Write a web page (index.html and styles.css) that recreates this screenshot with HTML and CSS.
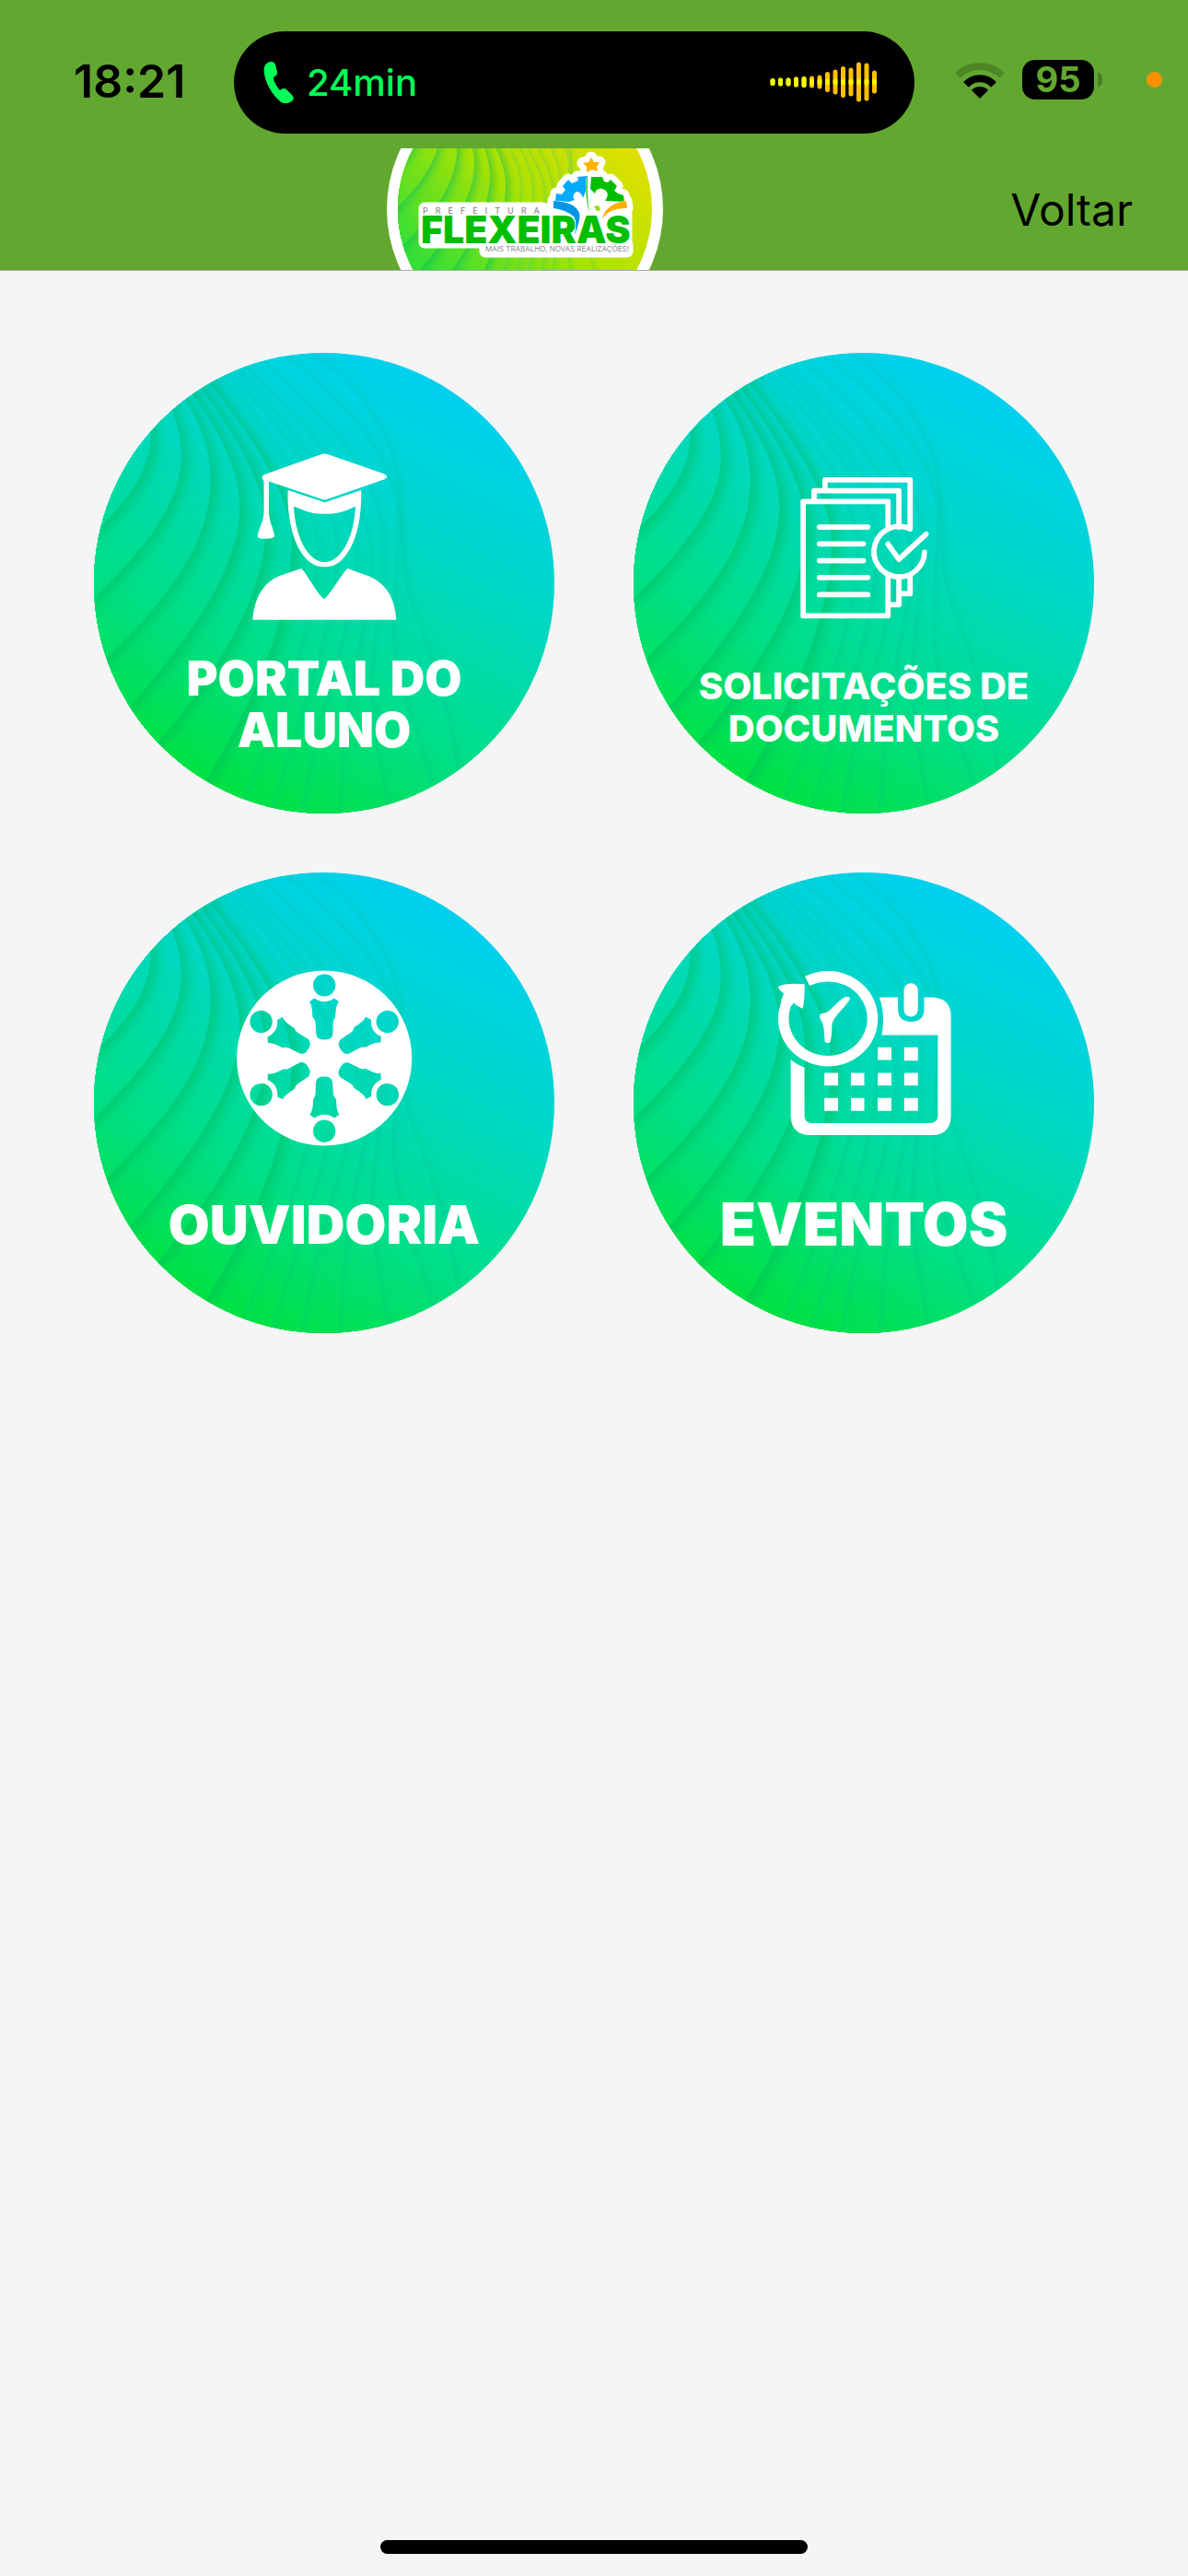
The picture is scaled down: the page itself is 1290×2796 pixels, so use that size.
FILE: index.html
```html
<!DOCTYPE html>
<html lang="pt-BR">
<head>
    <meta charset="UTF-8">
    <meta name="viewport" content="width=device-width, initial-scale=1.0">
    <title>Prefeitura Flexeiras</title>
    <link rel="stylesheet" href="styles.css">
</head>
<body>
    <!-- shared shapes: layered waves used by the cards and the logo -->
    <svg class="defs" aria-hidden="true">
        <defs>
            <linearGradient id="aqua" gradientUnits="userSpaceOnUse" x1="1100" y1="100" x2="400" y2="1440">
                <stop offset="0" stop-color="#00d0f0"/>
                <stop offset="0.3" stop-color="#00d8cc"/>
                <stop offset="0.7" stop-color="#00df86"/>
                <stop offset="1" stop-color="#00e23e"/>
            </linearGradient>
            <linearGradient id="lime" gradientUnits="userSpaceOnUse" x1="1180" y1="250" x2="320" y2="1150">
                <stop offset="0" stop-color="#e2e000"/>
                <stop offset="0.5" stop-color="#ace300"/>
                <stop offset="1" stop-color="#35df35"/>
            </linearGradient>
            <filter id="fold" filterUnits="userSpaceOnUse" x="-50" y="-50" width="1650" height="1650">
                <feDropShadow dx="24" dy="6" stdDeviation="20" flood-color="#00b858" flood-opacity="0.5"/>
            </filter>
            <filter id="softFold" filterUnits="userSpaceOnUse" x="-50" y="-50" width="1650" height="1650">
                <feDropShadow dx="14" dy="2" stdDeviation="14" flood-color="#00b888" flood-opacity="0.24"/>
            </filter>
            <symbol id="waves" viewBox="36 38 1476 1476">
                <rect x="36" y="38" width="1476" height="1476"/>
                <g filter="url(#softFold)"><path d="M0 0H700L720 40C850 110 920 220 970 320C1020 420 1010 560 1030 760C1050 900 1180 1080 1220 1560H0Z"/></g>
                <g filter="url(#softFold)"><path d="M0 0H610L640 52C850 190 1005 400 1005 560C1005 760 985 850 995 1000C1010 1130 1080 1280 1160 1560H0Z"/></g>
                <g filter="url(#softFold)"><path d="M0 0H530L570 70C760 220 950 440 955 620C960 850 900 1050 930 1200C940 1330 970 1450 985 1560H0Z"/></g>
                <g filter="url(#softFold)"><path d="M0 0H490L520 85C690 240 910 500 920 680C930 880 820 1100 820 1560H0Z"/></g>
                <g filter="url(#softFold)"><path d="M0 0H460L490 95C640 240 860 520 872 680C880 880 760 1080 690 1560H0Z"/></g>
                <g filter="url(#softFold)"><path d="M0 0H430L465 108C620 260 800 490 810 650C815 880 700 1180 580 1560H0Z"/></g>
                <g filter="url(#softFold)"><path d="M0 0H400L440 120C560 260 740 480 745 640C755 870 640 1180 470 1560H0Z"/></g>
                <g filter="url(#fold)"><path d="M0 0H370L410 140C520 280 670 480 670 650C665 880 560 1150 350 1480L0 1560Z"/></g>
                <g filter="url(#fold)"><path d="M0 0H340L385 160C480 290 580 440 585 590C590 810 440 1060 180 1360L0 1560Z"/></g>
                <g filter="url(#fold)"><path d="M0 0H310L355 175C430 280 500 400 503 530C505 720 350 960 80 1250L0 1360Z"/></g>
                <g filter="url(#fold)"><path d="M0 0H280L328 190C380 270 410 350 410 450C405 660 270 840 0 1090Z"/></g>
                <g filter="url(#fold)"><path d="M0 0H250L288 230C308 280 318 330 315 390C305 540 180 690 0 860Z"/></g>
                <g filter="url(#fold)"><path d="M0 0H200L218 290C220 430 130 530 0 650Z"/></g>
            </symbol>
            <g id="emblem">
                <path d="M222 10L225 15L231 15L228 20L229 25L223 23L217 26L217 20L213 16L219 15Z" fill="#ffb400"/>
                <path d="M218 30L207 31L208 35L201 38L197 34L191 41L194 45L190 50L184 49L183 57L198 58L204 56Q200 51 206 47Q211 47 213 54L217 44Z" fill="#00aaff"/>
                <path d="M181 57Q204 58 209 70Q211 76 204 94Q207 80 203 74Q195 67 181 65Z" fill="#0096e6"/>
                <path d="M221 44L222 31L234 31L236 36L240 37L243 34L250 41L247 46L251 49L257 51L258 58L237 57Q242 50 238 46Q232 41 227 46L226 49Z" fill="#00be00"/>
                <path d="M260 57L261 65Q243 64 234 76Q238 60 260 57Z" fill="#ffae00"/>
                <path d="M217 32Q215 52 220 71Q217 52 218 32Z" fill="#00be00"/>
                <path d="M225 63L230 62L232 67L228 68Z" fill="#9bd400"/>
            </g>
        </defs>
    </svg>

    <header class="header">
        <div class="status-bar">
            <span class="time">18:21</span>
            <div class="island">
                <svg class="phone-icon" viewBox="0 0 33 45" aria-hidden="true">
                    <path d="M5 1C8-1 12 0 13 3L15 11C16 14 13 15 11 17C11 21 15 28 18 31C20 29 23 28 25 30L31 36C34 39 33 42 29 44C25 46 21 46 17 42C9 35 2 22 1 13C0 7 1 3 5 1Z"/>
                </svg>
                <span class="call-time">24min</span>
                <svg class="sound-wave" viewBox="0 0 118 44" aria-hidden="true">
                    <path d="M3 20.500V23.500M11.500 20V24M20 20V24M28.500 19V25M37 18.500V25.500M45.500 18V26M54 17V27M62.500 13.500V30.500M71 11V33M79.500 7.500V36.500M88 9V35M96.500 3V41M105 4V40M113.500 12V32" stroke="#ffc000"/>
                    <path d="M3 20.500V23.500M11.500 20V24M20 20V24M28.500 19V25M37 18.500V25.500" stroke="#f2fb00"/>
                    <path d="M45.500 21V23M54 21V23M62.500 21V23M71 21V23M79.500 21V23M88 21V23M96.500 21V23M105 21V23M113.500 21V23" stroke="#fff200"/>
                </svg>
            </div>
            <div class="indicators">
                <svg class="wifi-icon" viewBox="0 0 54 40" aria-hidden="true">
                    <path d="M3 15A34 34 0 0 1 51 15" fill="none" stroke="#000" stroke-opacity="0.2" stroke-width="8"/>
                    <path d="M12 25A20 20 0 0 1 42 25" fill="none" stroke="#000" stroke-width="8"/>
                    <path d="M27 40L18 31A12 12 0 0 1 36 31Z"/>
                </svg>
                <div class="battery"><span class="level">95</span></div>
                <span class="mic-dot"></span>
            </div>
        </div>
        <nav class="nav">
            <div class="logo">
                <svg class="logo-image" viewBox="0 0 300 132" role="img" aria-label="Prefeitura Flexeiras">
                    <clipPath id="logoRound"><circle cx="150" cy="66" r="138"/></clipPath>
                    <circle cx="150" cy="66" r="150" fill="#fff"/>
                    <g clip-path="url(#logoRound)">
                        <use href="#waves" x="0" y="-84" width="300" height="300" fill="url(#lime)"/>
                    </g>
                    <g class="logo-outline">
                        <use href="#emblem"/>
                        <path d="M41 71H260V102H41ZM107 105H261V112H107ZM41 65H170V72H41ZM190 58H252V80H190Z"/>
                    </g>
                    <text class="logo-top" x="39" y="71">PREFEITURA</text>
                    <text class="logo-name" x="37" y="103">FLEXEIRAS</text>
                    <text class="logo-slogan" x="107" y="112">MAIS TRABALHO, NOVAS REALIZAÇÕES!</text>
                    <use href="#emblem" stroke="#fff" stroke-width="1" paint-order="stroke"/>
                </svg>
            </div>
            <button type="button" class="back">Voltar</button>
        </nav>
    </header>

    <main class="menu">
        <a class="card" href="#portal">
            <svg class="card-bg" aria-hidden="true"><use href="#waves" width="100%" height="100%" fill="url(#aqua)"/></svg>
            <svg class="card-icon" viewBox="478 334 591 591" aria-hidden="true">
                <path d="M768 363Q775 360 782 363L965 426Q985 436 965 445L782 508Q775 511 768 508L596 451V553C597 580 613 608 614 626Q613 635 587 635Q560 635 560 628C560 610 579 580 580 553V450Q568 435 580 429Z"/>
                <path fill-rule="evenodd" d="M657 479L775 518L892 479C896 600 860 700 800 722Q775 728 750 722C690 700 653 600 657 479ZM676 531C680 620 715 695 762 708Q775 711 788 708C835 695 870 620 874 531C850 540 830 555 775 555C720 555 700 537 676 531Z"/>
                <path d="M544 895C550 810 590 768 635 752L700 730C722 752 750 812 774 828C792 815 832 745 848 730L910 752C960 770 1000 810 1005 895Z"/>
            </svg>
            <span class="label">PORTAL DO ALUNO</span>
        </a>
        <a class="card" href="#documentos">
            <svg class="card-bg" aria-hidden="true"><use href="#waves" width="100%" height="100%" fill="url(#aqua)"/></svg>
            <svg class="card-icon outline" viewBox="497 334 591 591" aria-hidden="true">
                <path d="M870 598V515H598V882H870V755M633 510V481H905V598M905 760V846H876M668 475V446H941V603A81 81 0 1 0 987 678M941 757V811H910"/>
                <path d="M870 652L905 701L992 620M650 597H805M650 651H791M650 705H791M650 759H805M650 814H805"/>
            </svg>
            <span class="label small">SOLICITAÇÕES DE DOCUMENTOS</span>
        </a>
        <a class="card" href="#ouvidoria">
            <svg class="card-bg" aria-hidden="true"><use href="#waves" width="100%" height="100%" fill="url(#aqua)"/></svg>
            <svg class="card-icon" viewBox="478 345 591 591" aria-hidden="true">
                <defs>
                    <g id="person">
                        <circle cx="774" cy="411" r="36"/>
                        <path d="M742 453L726 464C737 480 734 500 737 515Q746 520 746 540L748 570Q752 586 774 586Q797 586 801 570L802 545Q801 520 809 515C811 495 810 478 821 463L805 453Q774 475 742 453Z"/>
                    </g>
                    <mask id="people">
                        <rect x="478" y="345" width="591" height="591" fill="#fff"/>
                        <g fill="#000">
                            <use href="#person"/>
                            <use href="#person" transform="rotate(60 774 645)"/>
                            <use href="#person" transform="rotate(120 774 645)"/>
                            <use href="#person" transform="rotate(180 774 645)"/>
                            <use href="#person" transform="rotate(240 774 645)"/>
                            <use href="#person" transform="rotate(300 774 645)"/>
                        </g>
                    </mask>
                </defs>
                <circle cx="774" cy="645" r="281" mask="url(#people)"/>
            </svg>
            <span class="label large">OUVIDORIA</span>
        </a>
        <a class="card" href="#eventos">
            <svg class="card-bg" aria-hidden="true"><use href="#waves" width="100%" height="100%" fill="url(#aqua)"/></svg>
            <svg class="card-icon" viewBox="497 345 591 591" aria-hidden="true">
                <path d="M611 398A143 136 0 1 1 550 457" fill="none" stroke="#fff" stroke-width="34"/>
                <path d="M518 416Q540 403 602 408Q604 450 597 486Q575 478 569 468L550 485L526 462Q538 435 534 436Q518 425 518 416Z"/>
                <path d="M742 448Q752 452 744 462C725 490 692 515 690 540Q690 580 684 594Q677 598 668 594C664 570 668 540 653 520Q648 505 656 502Q675 500 685 490C710 465 725 448 742 448Z"/>
                <path d="M842 450H902V490Q904 528 944 528Q985 528 986 490V450H1015Q1072 455 1072 510V835Q1068 890 1015 892H615Q560 888 558 832V650Q580 668 602 675V830Q604 852 625 853H1008Q1030 850 1030 830V571H850Q862 500 842 450Z"/>
                <rect x="921" y="405" width="45" height="107" rx="22"/>
                <path d="M837 610h44v41h-44zM922 610h44v43h-44zM666 692h44v41h-44zM751 692h43v41h-43zM837 692h44v41h-44zM922 692h44v41h-44zM666 773h44v41h-44zM751 773h43v41h-43zM837 773h44v41h-44zM922 773h44v41h-44z"/>
            </svg>
            <span class="label xlarge">EVENTOS</span>
        </a>
    </main>

    <div class="home-indicator"></div>
</body>
</html>
```
FILE: styles.css
```css
* {
    box-sizing: border-box;
}

body {
    font-family: Inter, 'Liberation Sans', sans-serif;
    background-color: #f5f5f5;
    color: #000;
    display: flex;
    flex-direction: column;
    min-height: 100vh;
    margin: 0;
}

.defs {
    position: absolute;
    width: 0;
    height: 0;
}

.header {
    background-color: #62a830;
    border-bottom: 1px solid #a8a8a8;
}

/* status bar */
.status-bar {
    display: flex;
    align-items: center;
    height: 161px;
    padding: 0 28px 0 80px;
}

.time {
    flex: none;
    width: 174px;
    font-size: 50px;
    font-weight: 600;
    line-height: 60px;
    margin-top: 15px;
}

.island {
    flex: 1;
    display: flex;
    align-items: center;
    height: 111px;
    margin-top: 17px;
    padding: 0 39px 0 32px;
    border-radius: 56px;
    background-color: #000;
}

.phone-icon {
    width: 33px;
    height: 45px;
    fill: #04ff58;
}

.call-time {
    margin-left: 14px;
    color: #04ff58;
    font-size: 40px;
    font-weight: 500;
}

.sound-wave {
    width: 118px;
    height: 44px;
    margin-left: auto;
    fill: none;
    stroke-width: 5;
    stroke-linecap: round;
}

.indicators {
    flex: none;
    display: flex;
    align-items: center;
    width: 269px;
    margin-top: 12px;
    padding-left: 44px;
}

.wifi-icon {
    width: 54px;
    height: 40px;
}

.battery {
    position: relative;
    width: 78px;
    height: 43px;
    margin-left: 19px;
    border-radius: 14px;
    background-color: #000;
    text-align: center;
}

.battery::after {
    content: "";
    position: absolute;
    top: 14px;
    left: 82px;
    width: 5px;
    height: 15px;
    border-radius: 0 5px 5px 0;
    background-color: rgba(0, 0, 0, 0.25);
}

.level {
    color: #62a830;
    font-size: 38px;
    font-weight: 700;
    line-height: 43px;
}

.mic-dot {
    width: 17px;
    height: 17px;
    margin-left: auto;
    border-radius: 50%;
    background-color: #ff9100;
}

/* nav */
.nav {
    display: flex;
    align-items: center;
    height: 132px;
    padding: 0 60px 0 42px;
}

.logo {
    flex: 1;
    display: flex;
    justify-content: center;
}

.logo-image {
    width: 300px;
    height: 132px;
}

.logo-outline {
    fill: #fff;
    stroke: #fff;
    stroke-width: 13;
    stroke-linejoin: round;
}

.logo-top {
    fill: #8c8c8c;
    font-size: 9px;
    font-weight: 500;
    letter-spacing: 8px;
}

.logo-name {
    fill: #00be00;
    font-size: 41px;
    font-weight: 900;
}

.logo-slogan {
    fill: #8c8c8c;
    font-size: 8px;
}

.back {
    padding: 0;
    border: none;
    background: none;
    color: #000;
    font-family: inherit;
    font-size: 48px;
    cursor: pointer;
}

/* cards */
.menu {
    flex: 1;
    display: grid;
    grid-template-columns: 1fr 1fr;
    align-content: start;
    gap: 64px 86px;
    padding: 89px 102px;
}

.card {
    position: relative;
    display: flex;
    flex-direction: column;
    align-items: center;
    aspect-ratio: 1;
    padding-top: 100px;
    border-radius: 50%;
    overflow: hidden;
    color: #fff;
    text-decoration: none;
}

.card-bg {
    position: absolute;
    top: 0;
    left: 0;
    width: 100%;
    height: 100%;
}

.card-icon {
    position: relative;
    width: 200px;
    height: 200px;
    fill: #fff;
}

.card-icon.outline {
    fill: none;
    stroke: #fff;
    stroke-width: 17;
    stroke-linecap: round;
    stroke-linejoin: round;
}

.label {
    position: relative;
    display: flex;
    align-items: center;
    justify-content: center;
    width: 380px;
    height: 112px;
    margin-top: 26px;
    text-align: center;
    font-size: 52px;
    font-weight: 900;
    line-height: 56px;
}

.label.small {
    height: 118px;
    font-size: 40px;
    font-weight: 800;
    line-height: 46px;
}

.label.large {
    font-size: 58px;
}

.label.xlarge {
    font-size: 64px;
}

.home-indicator {
    width: 36%;
    height: 15px;
    margin: 0 auto 24px;
    border-radius: 8px;
    background-color: #000;
}
```
